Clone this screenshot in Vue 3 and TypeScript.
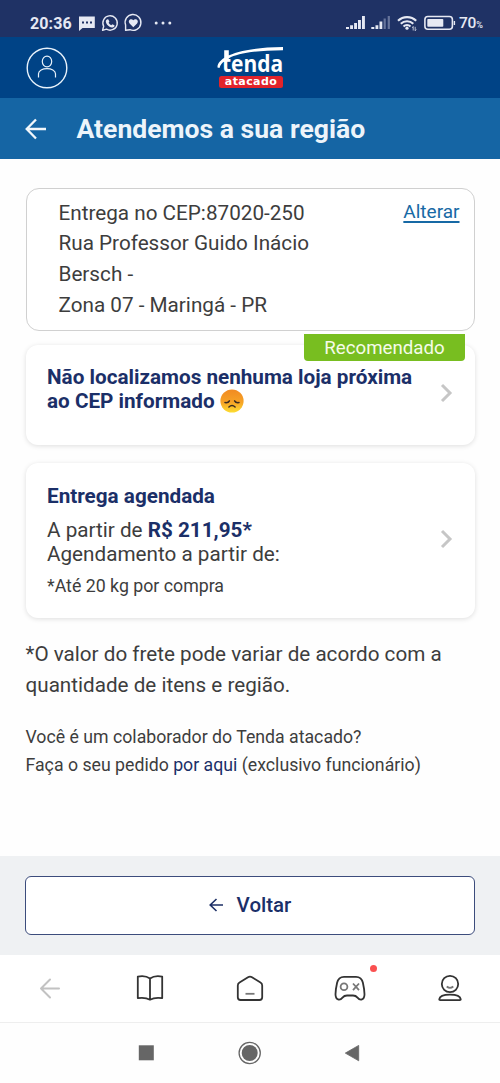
<script setup lang="ts">
import { ref } from 'vue'

const addressLines = ref<string[]>([
  'Entrega no CEP:87020-250',
  'Rua Professor Guido Inácio',
  'Bersch -',
  'Zona 07 - Maringá - PR',
])
</script>

<template>
  <div class="screen">
    <div class="status">
      <span class="clock">20:36</span>
      <svg class="status-left" width="100" height="24" viewBox="76 11 100 24" fill="none">
        <path d="M79 16.5h15.8v11.6H82.5L79 31z" fill="#e6e9f3" />
        <path d="M82 21.5h2v2h-2zM86 21.5h2v2h-2zM90 21.5h2v2h-2z" fill="#1f3265" />
        <path d="M102.6 30.3l1.1-4A7.2 7.2 0 1 1 106.5 29.2z" stroke="#e6e9f3" stroke-width="1.4" stroke-linejoin="round" />
        <path d="M107.2 19.3l1.2.1 1 2.3-.8 1c.7 1.3 1.5 2 2.7 2.5l1-1 2.2 1.1c.2 1.5-1.2 2.4-2.5 2.2-3.5-.6-5.9-3.3-6.2-6 0-.9.6-1.8 1.4-2.2z" fill="#e6e9f3" />
        <path d="M125.6 30.3v-5.2A7.9 7.9 0 1 1 130 29.7z" stroke="#e6e9f3" stroke-width="1.4" stroke-linejoin="round" />
        <path d="M133.3 27.2l-3.7-3.8c-2.4-2.7 1.5-5.7 3.7-3.1 2.2-2.6 6.2.4 3.8 3.1z" fill="#e6e9f3" />
        <circle cx="156.2" cy="23" r="1.5" fill="#e6e9f3" />
        <circle cx="163" cy="23" r="1.5" fill="#e6e9f3" />
        <circle cx="169.8" cy="23" r="1.5" fill="#e6e9f3" />
      </svg>
      <svg class="status-right" width="112" height="24" viewBox="345 11 112 24" fill="none">
        <g fill="#e6e9f3">
          <path d="M346 27h3v2h-3zM350.1 25.2h2.9V29h-2.900zM354.100 23h2.900v6h-2.900zM358 20h2.900v9h-2.900zM362 16h2.900v13h-2.900z" />
          <path d="M371.300 27h3v2h-3zM375.500 25.200h2.800V29h-2.800zM379.500 21.500h2.800V29h-2.800z" />
        </g>
        <path d="M383.600 18.500h2.200V29h-2.200zM387.700 16h2.200v13h-2.200z" fill="#66749b" />
        <g stroke="#e6e9f3" stroke-width="2.100">
          <path d="M398 20.800a13 13 0 0 1 18.200 0M400.800 23.800a9 9 0 0 1 12.500 0M403.500 26.500a5.200 5.200 0 0 1 7 0" />
        </g>
        <circle cx="407" cy="28.200" r="1.600" fill="#e6e9f3" />
        <path d="M413.200 30.500v-4l-1 1.400M415.200 26.800v4l1-1.400" stroke="#c8cee0" stroke-width=".9" />
        <rect x="424.900" y="16.500" width="27.500" height="12.700" rx="3" stroke="#e6e9f3" stroke-width="1.600" />
        <rect x="427.300" y="19" width="16" height="7.700" rx=".8" fill="#e6e9f3" />
        <path d="M453.700 21h1.400v4h-1.400z" fill="#e6e9f3" />
      </svg>
      <span class="battery">70<small>%</small></span>
    </div>

    <header class="brand">
      <svg class="avatar" width="42" height="42" viewBox="0 0 42 42" fill="none" stroke="#e8f2fb">
        <circle cx="21" cy="21" r="19.800" stroke-width="1.400" />
        <ellipse cx="21" cy="14.500" rx="4.700" ry="5.400" stroke-width="1.200" />
        <path d="M12.500 30.500v-3.700c0-6.800 17-6.800 17 0v3.700" stroke-width="1.200" />
      </svg>
      <div class="logo">
        <svg class="swoosh" width="68" height="44" viewBox="217 46 68 44">
          <path d="M217.500 67.500C217 58 236 47.500 283 47v3.200c-30 .300-46 3.600-54 8-5.500 2.800-8.500 5.700-9.500 9.900zM224.200 50.300h4.600v9h-4.600z" fill="#fff" />
          <text class="logo-name" x="221.900" y="71.900" textLength="61.200" lengthAdjust="spacingAndGlyphs">tenda</text>
        </svg>
        <span class="logo-sub">atacado</span>
      </div>
    </header>

    <div class="title-bar">
      <svg width="22" height="22" viewBox="0 0 22 22" fill="none" stroke="#f2f7fb" stroke-width="2.300">
        <path d="M21 11H2M11 1.500L1.700 11l9.300 9.500" />
      </svg>
      <h1>Atendemos a sua região</h1>
    </div>

    <main>
      <section class="address">
        <div><p v-for="line in addressLines" :key="line">{{ line }}</p></div>
        <a>Alterar</a>
      </section>

      <section class="card pickup">
        <span class="badge">Recomendado</span>
        <div class="bold">
          <p class="l1">Não localizamos nenhuma loja próxima</p>
          <p class="l2">ao CEP informado
            <svg class="emoji" width="24" height="24" viewBox="0 0 24 24">
              <defs>
                <linearGradient id="face" x1="0" y1="0" x2="0" y2="1">
                  <stop offset="0" stop-color="#f18a22" /><stop offset=".55" stop-color="#f6a226" /><stop offset="1" stop-color="#fdde32" />
                </linearGradient>
              </defs>
              <circle cx="12" cy="12" r="11.600" fill="url(#face)" />
              <path d="M5 13.600q3.300.5 4.400-1.700M14.600 11.900q1.100 2.200 4.400 1.700M8.900 18q3.100-2.900 6.200 0" fill="none" stroke="#3a2b20" stroke-width="1.500" stroke-linecap="round" />
            </svg>
          </p>
        </div>
        <svg class="chevron" width="13" height="20" viewBox="0 0 13 20"><path d="M2 2l8 8-8 8" fill="none" stroke="#c6c6c6" stroke-width="3" /></svg>
      </section>

      <section class="card delivery">
        <div>
          <p class="bold heading">Entrega agendada</p>
          <p class="price">A partir de <b>R$ 211,95*</b></p>
          <p class="sched">Agendamento a partir de:</p>
          <p class="limit">*Até 20 kg por compra</p>
        </div>
        <svg class="chevron" width="13" height="20" viewBox="0 0 13 20"><path d="M2 2l8 8-8 8" fill="none" stroke="#c6c6c6" stroke-width="3" /></svg>
      </section>

      <div class="note">
        <p>*O valor do frete pode variar de acordo com a</p>
        <p>quantidade de itens e região.</p>
      </div>
      <div class="staff">
        <p>Você é um colaborador do Tenda atacado?</p>
        <p>Faça o seu pedido <a>por aqui</a> (exclusivo funcionário)</p>
      </div>
    </main>

    <footer>
      <button type="button">
        <svg width="15" height="14" viewBox="0 0 15 14" fill="none" stroke="#1d2f66" stroke-width="1.600"><path d="M14 7H1.500M7.500 1L1.200 7l6.300 6" /></svg>
        <span>Voltar</span>
      </button>
    </footer>

    <nav class="browser">
      <div><svg width="32" height="32" viewBox="0 0 32 32" fill="none" stroke="#c2c2c2" stroke-width="2" stroke-linecap="round" stroke-linejoin="round"><path d="M25 16.500H7M16 7.500l-9 9 9 9" /></svg></div>
      <div><svg width="32" height="32" viewBox="0 0 32 32" fill="none" stroke="#333" stroke-width="1.800" stroke-linejoin="round"><path d="M16 6.500C13 4.300 8 3.800 3.800 4.600v21.500c4.200-.6 9-.3 12.200 1.600 3.200-1.900 8-2.200 12.200-1.600V4.600C24 3.800 19 4.300 16 6.500zM16 6.500v21" /></svg></div>
      <div><svg width="32" height="32" viewBox="0 0 32 32" fill="none" stroke="#333" stroke-width="1.800" stroke-linejoin="round"><path d="M3.800 13.500q0-2 1.700-3L14 5.200q2-1.300 4 0l8.500 5.300q1.700 1 1.700 3v11.800q0 2.700-2.700 2.700h-19q-2.700 0-2.700-2.700z" /><path d="M11.500 21.800h9" stroke="#777" /></svg></div>
      <div>
        <svg width="32" height="32" viewBox="0 0 32 32" fill="none" stroke="#333" stroke-width="1.800" stroke-linejoin="round"><path d="M10 4.800h12c4 0 6 2 6.900 6 .8 3.500 1.600 7.500 1.600 11.500 0 6-4.500 6.500-7 3.300-1.300-1.600-2.300-2.100-4.500-2.100h-6c-2.200 0-3.200.5-4.500 2.100-2.500 3.200-7 2.700-7-3.300 0-4 .8-8 1.600-11.500.9-4 2.900-6 6.900-6z" /><circle cx="10" cy="14.800" r="3.400" stroke="#777" /><path d="M19 11.500l6 6.600M25 11.500l-6 6.600" stroke="#777" /></svg>
        <i class="dot"></i>
      </div>
      <div><svg width="32" height="32" viewBox="0 0 32 32" fill="none" stroke="#333" stroke-width="1.800" stroke-linejoin="round"><circle cx="16" cy="12" r="8.200" /><path d="M12.700 14.500q3.300 2.700 6.600 0" stroke="#777" /><path d="M5.200 27.300c1-6.200 20.600-6.200 21.600 0q0 .9-1 .9H6.200q-1 0-1-.9z" /></svg></div>
    </nav>

    <div class="system">
      <svg width="240" height="26" viewBox="130 1040 240 26">
        <rect x="138.800" y="1045.300" width="15" height="15" fill="#666" />
        <circle cx="249.700" cy="1053" r="10.600" fill="none" stroke="#666" stroke-width="1.300" />
        <circle cx="249.700" cy="1053" r="8" fill="#666" />
        <path d="M358.700 1045.400v15.400l-13.400-7.700z" fill="#666" stroke="#666" stroke-width=".8" stroke-linejoin="round" />
      </svg>
    </div>
  </div>
</template>

<style>
html, body { margin: 0; background: #fff; }
</style>

<style scoped>
* { box-sizing: border-box; }
.screen { display: flex; flex-direction: column; width: 500px; height: 1083px; overflow: hidden; background: #fefefe; color: #3d3d3d; font-family: Roboto, "Liberation Sans", sans-serif; }
p, h1 { margin: 0; white-space: nowrap; }
svg { display: block; flex: none; }
.status { display: flex; flex: none; height: 37px; padding: 9px 16px 0 30px; background: #1f3265; color: #e6e9f3; }
.status svg { margin-top: 2px; }
.clock { width: 46px; font-size: 16px; font-weight: 700; line-height: 29px; letter-spacing: .1px; }
.status .status-right { margin-left: auto; }
.battery { width: 25px; margin-left: 2px; font-size: 15.500px; font-weight: 500; line-height: 29px; letter-spacing: -.2px; white-space: nowrap; }
.battery small { font-size: 9px; }
.brand { display: flex; flex: none; height: 61px; padding-left: 26px; background: #004386; }
.avatar { margin-top: 9.500px; }
.logo { width: 68px; margin: 9px 0 0 149px; }
.swoosh { height: 44px; margin-bottom: -14.500px; overflow: visible; }
.logo-name { fill: #fff; font: 700 22.500px "Open Sans", sans-serif; }
.logo-sub { position: relative; display: block; width: 64px; height: 12.500px; margin-left: 2px; border-radius: 2.500px; background: #e2232a; color: #fff; font: 700 11px/12px "DejaVu Sans", sans-serif; letter-spacing: .4px; text-align: center; }
.title-bar { display: flex; flex: none; align-items: center; height: 61px; padding-left: 25px; background: #1565a4; }
h1 { margin-left: 29.500px; color: #edf4fa; font-size: 26.550px; font-weight: 700; line-height: 36px; }
main { flex: none; height: 697px; padding: 28.500px 25px 0 25.500px; }
.address { display: flex; justify-content: space-between; height: 143.500px; padding: 9px 14.500px 0 32px; border: 1px solid #d0d0d0; border-radius: 13px; font-size: 20.700px; line-height: 30.900px; background: #fff; }
.address a { color: #1769a5; font-size: 19px; line-height: 28px; text-decoration: underline; text-decoration-thickness: 1.500px; text-underline-offset: 3px; }
.card { position: relative; display: flex; justify-content: space-between; padding: 0 22px 0 21.500px; border-radius: 12px; background: #fff; box-shadow: 0 1px 5px rgba(0, 0, 0, .13); }
.pickup { height: 100px; margin-top: 13.500px; padding-top: 20.500px; }
.delivery { height: 155px; margin-top: 18px; padding-top: 19.500px; }
.badge { position: absolute; top: -11px; right: 10px; width: 161px; height: 27.500px; border-radius: 0 0 4px 4px; background: #78be20; color: #f5fbe9; font-size: 18.700px; line-height: 28px; text-align: center; }
.bold { color: #1b2f68; font-weight: 700; font-size: 20.700px; line-height: 24px; }
.l2 { display: flex; gap: 5px; }
.chevron { margin-top: 18px; }
.delivery .chevron { margin-top: 47px; }
.heading { line-height: 28px; }
.price { margin-top: 8px; font-size: 20.700px; line-height: 24px; }
.price b { color: #1b2f68; }
.sched { font-size: 20.700px; line-height: 24px; }
.limit { margin-top: 7px; font-size: 17.750px; line-height: 26px; }
.note { margin-top: 21px; font-size: 20.670px; line-height: 31px; }
.staff { margin-top: 22.500px; font-size: 17.720px; line-height: 28px; }
.staff a { color: #1b2f68; }
footer { flex: none; height: 99px; padding: 20px 25px; background: #eff1f3; }
button { display: flex; align-items: center; justify-content: center; gap: 13px; width: 450px; height: 59px; padding: 0 0 2px; border: 1.300px solid #3c4c7c; border-radius: 6px; background: #fff; color: #1b2f68; font: 500 20.500px Roboto, sans-serif; }
.browser { display: grid; flex: none; grid-template-columns: repeat(5, 1fr); height: 68px; border-bottom: 1px solid #eee; background: #fff; }
.browser div { position: relative; display: flex; justify-content: center; padding-top: 17px; }
.dot { position: absolute; top: 10px; left: 70px; width: 7px; height: 7px; border-radius: 50%; background: #fa5050; }
.system { display: flex; justify-content: center; padding-top: 17px; }
</style>
